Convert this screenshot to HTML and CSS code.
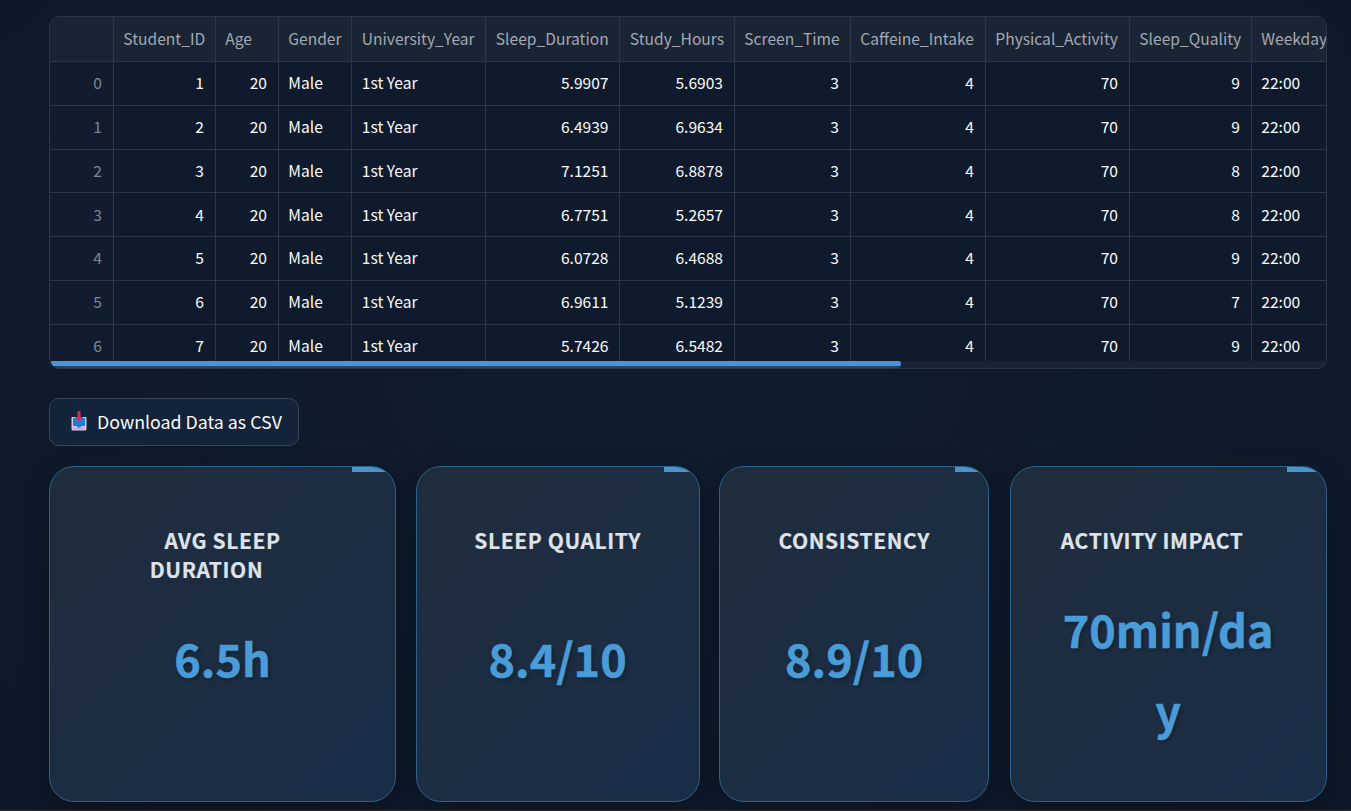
FILE: index.html
```html
<!DOCTYPE html>
<html lang="en">
<head>
<meta charset="utf-8">
<title>Sleep dashboard</title>
<link rel="stylesheet" href="styles.css">
</head>
<body>
<main class="page">
  <section class="table">
    <div class="grid head">
      <div class="c"></div><div class="c">Student_ID</div><div class="c">Age</div><div class="c">Gender</div><div class="c">University_Year</div><div class="c">Sleep_Duration</div><div class="c">Study_Hours</div><div class="c">Screen_Time</div><div class="c">Caffeine_Intake</div><div class="c">Physical_Activity</div><div class="c">Sleep_Quality</div><div class="c">Weekday_Sleep_Start</div>
    </div>
    <div class="grid"><div class="c idx">0</div><div class="c n">1</div><div class="c n">20</div><div class="c">Male</div><div class="c">1st Year</div><div class="c n">5.9907</div><div class="c n">5.6903</div><div class="c n">3</div><div class="c n">4</div><div class="c n">70</div><div class="c n">9</div><div class="c">22:00</div></div>
    <div class="grid"><div class="c idx">1</div><div class="c n">2</div><div class="c n">20</div><div class="c">Male</div><div class="c">1st Year</div><div class="c n">6.4939</div><div class="c n">6.9634</div><div class="c n">3</div><div class="c n">4</div><div class="c n">70</div><div class="c n">9</div><div class="c">22:00</div></div>
    <div class="grid"><div class="c idx">2</div><div class="c n">3</div><div class="c n">20</div><div class="c">Male</div><div class="c">1st Year</div><div class="c n">7.1251</div><div class="c n">6.8878</div><div class="c n">3</div><div class="c n">4</div><div class="c n">70</div><div class="c n">8</div><div class="c">22:00</div></div>
    <div class="grid"><div class="c idx">3</div><div class="c n">4</div><div class="c n">20</div><div class="c">Male</div><div class="c">1st Year</div><div class="c n">6.7751</div><div class="c n">5.2657</div><div class="c n">3</div><div class="c n">4</div><div class="c n">70</div><div class="c n">8</div><div class="c">22:00</div></div>
    <div class="grid"><div class="c idx">4</div><div class="c n">5</div><div class="c n">20</div><div class="c">Male</div><div class="c">1st Year</div><div class="c n">6.0728</div><div class="c n">6.4688</div><div class="c n">3</div><div class="c n">4</div><div class="c n">70</div><div class="c n">9</div><div class="c">22:00</div></div>
    <div class="grid"><div class="c idx">5</div><div class="c n">6</div><div class="c n">20</div><div class="c">Male</div><div class="c">1st Year</div><div class="c n">6.9611</div><div class="c n">5.1239</div><div class="c n">3</div><div class="c n">4</div><div class="c n">70</div><div class="c n">7</div><div class="c">22:00</div></div>
    <div class="grid"><div class="c idx">6</div><div class="c n">7</div><div class="c n">20</div><div class="c">Male</div><div class="c">1st Year</div><div class="c n">5.7426</div><div class="c n">6.5482</div><div class="c n">3</div><div class="c n">4</div><div class="c n">70</div><div class="c n">9</div><div class="c">22:00</div></div>
    <div class="track"><div class="thumb"></div></div>
  </section>

  <button class="download" type="button">
    <svg class="tray" viewBox="0 0 16 20" width="16" height="20" aria-hidden="true">
      <path d="M1.5 6h13a1 1 0 0 1 1 1v11a1.5 1.5 0 0 1-1.5 1.5H2A1.5 1.5 0 0 1 .5 18V7a1 1 0 0 1 1-1z" fill="#d9c6e4"/>
      <path d="M2 7h12v8h-3.500l-1 1.500h-3L5.500 15H2z" fill="#1c7fd6"/>
      <path d="M2 17.200h12v1H2z" fill="#b79ad0"/>
      <path d="M6.500 0h3v6H12l-4 5-4-5h2.500z" fill="#e0245e"/>
    </svg>
    <span>Download Data as CSV</span>
  </button>

  <section class="cards">
    <article class="card">
      <h3 class="title">AVG SLEEP<br>DURATION<span class="anchor"></span></h3>
      <div class="value">6.5h</div>
    </article>
    <article class="card">
      <h3 class="title">SLEEP QUALITY</h3>
      <div class="value">8.4/10</div>
    </article>
    <article class="card">
      <h3 class="title">CONSISTENCY</h3>
      <div class="value">8.9/10</div>
    </article>
    <article class="card card-last">
      <h3 class="title">ACTIVITY IMPACT<span class="anchor"></span></h3>
      <div class="value wrap">70min/day</div>
    </article>
  </section>
</main>
</body>
</html>
```

FILE: styles.css
```css
* { box-sizing: border-box; }
html, body { margin: 0; height: 100%; }
body {
  background: #0f1b2c;
  color: #fff;
  font-family: "Noto Sans CJK SC", "Noto Sans", sans-serif;
  overflow: hidden;
}
.page {
  width: 1351px;
  height: 811px;
  padding: 16px 24px 0 49px;
  background: radial-gradient(ellipse at 50% 45%, #101d2f 0%, #0e1a2b 70%, #0d1828 100%);
  border-bottom: 1px solid #2a2a2e;
}
.table {
  position: relative;
  width: 1278px;
  height: 353px;
  border: 1px solid #2c3746;
  border-radius: 10px;
  overflow: hidden;
  background: #0f1b2c;
}
.grid {
  display: grid;
  grid-template-columns: 63.500px 102px 63px 73.500px 134px 134px 114.500px 116px 135px 144px 122px 200px;
  width: 1402px;
  height: 43.750px;
  font-size: 15.600px;
}
.head { height: 45.100px; }
.c {
  display: flex;
  align-items: center;
  padding: 0 10.500px 2px 9.800px;
  border-right: 1px solid #2c3746;
  border-bottom: 1px solid #2c3746;
  white-space: nowrap;
  overflow: hidden;
  color: #fafafa;
}
.head .c { color: #a4a9b2; background: #192434; }
.idx { justify-content: flex-end; color: #7e8692; background: #111d2f; }
.n { justify-content: flex-end; }
.track {
  position: absolute;
  left: 0;
  right: 0;
  bottom: 0;
  height: 7px;
  background: #182333;
}
.thumb {
  width: 851px;
  height: 5px;
  border-radius: 3px;
  background: #4a94d8;
  box-shadow: 0 2px 0 #2a4563;
}
.download {
  display: flex;
  align-items: center;
  gap: 10px;
  margin-top: 29px;
  width: 250px;
  height: 48px;
  padding: 0 0 2px 21px;
  border: 1px solid #3a4453;
  border-radius: 10px;
  background: #12233a;
  color: #fafafa;
  font: 400 17.800px "Noto Sans CJK SC", "Noto Sans", sans-serif;
  white-space: nowrap;
}
.tray { flex: none; }
.cards {
  display: grid;
  grid-template-columns: 347px 284px 270px 318px;
  gap: 19.600px;
  margin-top: 20px;
  height: 336px;
}
.card {
  position: relative;
  padding: 59px 20px 0;
  border: 1px solid #2f618c;
  border-radius: 25px;
  background: linear-gradient(135deg, #1f2c3c 0%, #1a2e48 100%);
  box-shadow: 0 5px 25px rgba(0, 0, 0, .3);
  overflow: hidden;
  text-align: center;
}
.card-last { margin-left: .800px; }
.card::after {
  content: "";
  position: absolute;
  top: 0;
  right: 0;
  width: 12.400%;
  height: 5px;
  background: #4a94d0;
}
.title {
  margin: 0;
  height: 58px;
  padding: 0 5px;
  font-size: 21px;
  line-height: 29px;
  font-weight: 700;
  letter-spacing: .6px;
  color: #dfe3e8;
  -webkit-text-stroke: .2px #dfe3e8;
}
.anchor { display: inline-block; width: 32px; }
.value {
  margin-top: 32px;
  padding: 0 25px;
  font-size: 45px;
  line-height: 83px;
  font-weight: 700;
  color: #4a9cd8;
  -webkit-text-stroke: .5px #4a9cd8;
  text-shadow: 2px 2px 4px rgba(0, 0, 0, .3);
  overflow-wrap: anywhere;
}
.wrap { margin-top: 4px; line-height: 81px; }
```
